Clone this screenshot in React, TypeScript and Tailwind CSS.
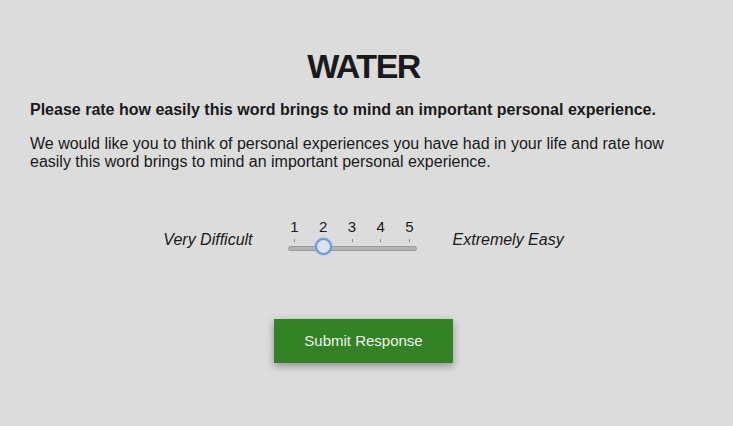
import React, { useState } from "react";

const labels = [1, 2, 3, 4, 5];

const RatingSlider = () => {
  const [value, setValue] = useState<number>(2);
  return (
    <div className="relative w-[129px] flex flex-col">
      <div className="flex justify-between text-[15px] leading-[18px] text-[#1a1a1a]">
        {labels.map((n) => (
          <div key={n} className="w-[14px] flex flex-col items-center">
            <span>{n}</span>
            <span className="mt-[3px] w-px h-[3px] bg-[#8a8a8a]" />
          </div>
        ))}
      </div>
      <div className="mt-[4px] h-[5px] rounded-full bg-[#b4b4b4] border border-[#9a9a9a]" />
      <button
        onClick={() => setValue(value === 5 ? 1 : value + 1)}
        className="absolute top-[20px] w-[17px] h-[17px] -ml-[8px] rounded-full bg-[#dde3ea] border-2 border-[#6b9ad8] shadow-[0_0_2px_#7fb0f0]"
        style={{ left: `${(value - 1) * 22 + 5.5}%` }}
      />
    </div>
  );
};

export default function App() {
  return (
    <div className="min-h-[426px] w-full bg-[#dcdcdc] pl-[30px] pr-[36px] pt-[46px] font-['Liberation_Sans',Arial,sans-serif] text-[#1a1a1a]">
      <h1 className="text-center text-[34px] font-bold leading-[40px] tracking-[-1.5px]">WATER</h1>
      <p className="mt-[15px] text-[16px] font-bold leading-[18px]">
        Please rate how easily this word brings to mind an important personal experience.
      </p>
      <p className="mt-[16px] text-[16px] leading-[18px]">
        We would like you to think of personal experiences you have had in your life and rate how
        easily this word brings to mind an important personal experience.
      </p>
      <div className="mt-[47px] flex items-start justify-center whitespace-nowrap">
        <span className="mt-[13px] italic text-[16px] leading-[18px]">Very Difficult</span>
        <div className="ml-[35px] mr-[36px]">
          <RatingSlider />
        </div>
        <span className="mt-[13px] italic text-[16px] leading-[18px]">Extremely Easy</span>
      </div>
      <div className="mt-[68px] flex justify-center">
        <button className="w-[179px] h-[44px] bg-[#338226] text-[#eef2ea] text-[15px] shadow-[0_3px_8px_rgba(0,0,0,0.35)]">
          Submit Response
        </button>
      </div>
    </div>
  );
}
